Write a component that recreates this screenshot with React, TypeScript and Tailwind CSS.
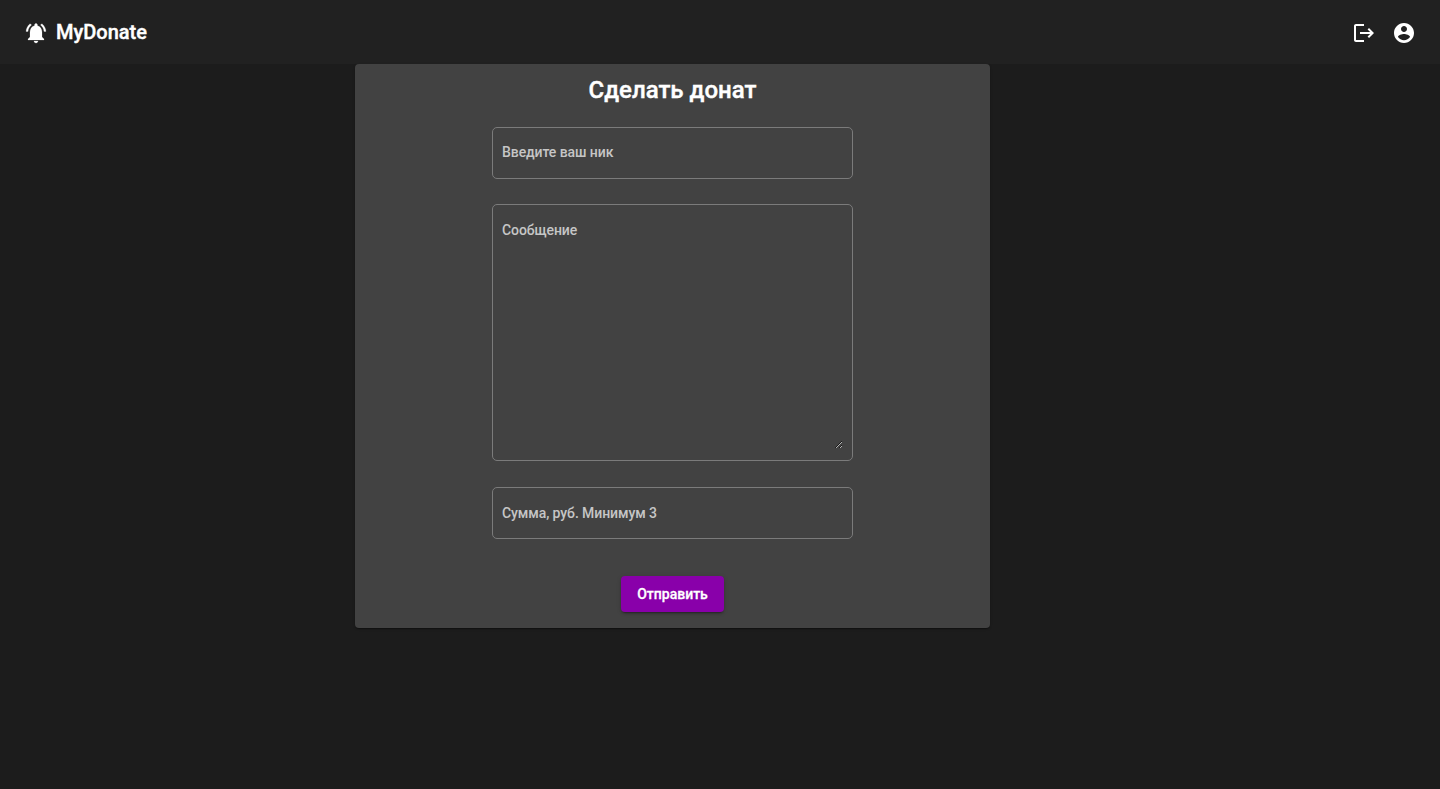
import React from "react";

const icons = {
  bell: "M7.58 4.08L6.15 2.65C3.75 4.48 2.17 7.3 2.03 10.5h2c.15-2.65 1.51-4.97 3.55-6.42zm12.39 6.42h2c-.15-3.2-1.73-6.02-4.12-7.85l-1.42 1.43c2.02 1.45 3.39 3.77 3.54 6.42zM18 11c0-3.07-1.64-5.64-4.5-6.32V4c0-.83-.67-1.5-1.5-1.5s-1.5.67-1.5 1.5v.68C7.63 5.36 6 7.92 6 11v5l-2 2v1h16v-1l-2-2v-5zm-6 11c.14 0 .27-.01.4-.04.65-.14 1.18-.58 1.44-1.18.1-.24.15-.5.15-.78h-4c.01 1.1.9 2 2.01 2z",
  logout: "M17 7l-1.41 1.41L18.17 11H8v2h10.17l-2.58 2.58L17 17l5-5zM4 5h8V3H4c-1.1 0-2 .9-2 2v14c0 1.1.9 2 2 2h8v-2H4V5z",
  account: "M12 2C6.48 2 2 6.48 2 12s4.48 10 10 10 10-4.48 10-10S17.52 2 12 2zm0 3c1.66 0 3 1.34 3 3s-1.34 3-3 3-3-1.34-3-3 1.34-3 3-3zm0 14.2c-2.5 0-4.71-1.28-6-3.22.03-1.99 4-3.08 6-3.08 1.99 0 5.97 1.09 6 3.08-1.29 1.94-3.5 3.22-6 3.22z",
};

function Icon({ name, className = "" }: { name: keyof typeof icons; className?: string }) {
  return (
    <svg viewBox="0 0 24 24" className={`size-6 fill-current ${className}`} aria-hidden="true">
      <path d={icons[name]} />
    </svg>
  );
}

const field =
  "block w-full bg-transparent text-sm font-medium leading-4 tracking-[-0.08px] text-white outline-none placeholder:text-[#c6c6c6]";
const frame = "w-[361px] rounded-[5px] border border-[#7b7b7b] px-[9px]";

export default function App() {
  return (
    <div className="flex h-screen flex-col overflow-hidden bg-[#1c1c1c] font-['Roboto',sans-serif] text-white">
      <header className="flex h-16 shrink-0 items-center justify-between bg-[#212121] px-6 pt-0.5">
        <div className="flex items-center gap-2">
          <Icon name="bell" className="stroke-current stroke-[0.2]" />
          <span className="pb-0.5 text-xl font-medium [-webkit-text-stroke:0.4px]">MyDonate</span>
        </div>
        <div className="flex gap-4">
          <button aria-label="Logout"><Icon name="logout" /></button>
          <button aria-label="Account"><Icon name="account" /></button>
        </div>
      </header>
      <main className="ml-[355px] h-[564px] w-[635px] shrink-0 rounded bg-[#424242] shadow-[0_2px_1px_-1px_rgba(0,0,0,0.2),0_1px_1px_0_rgba(0,0,0,0.14),0_1px_3px_0_rgba(0,0,0,0.12)]">
        <form className="flex flex-col items-center" onSubmit={(e) => e.preventDefault()}>
          <h1 className="mt-2.5 text-2xl leading-8 font-medium [-webkit-text-stroke:0.4px]">Сделать донат</h1>
          <div className={`${frame} mt-[21px] flex h-[52px] items-center pb-0.5`}>
            <input className={field} placeholder="Введите ваш ник" />
          </div>
          <div className={`${frame} mt-[25px] h-[257px] pt-[17px]`}>
            <textarea className={`${field} h-[227px] resize-y`} placeholder="Сообщение" />
          </div>
          <div className={`${frame} mt-[26px] flex h-[52px] items-center`}>
            <input className={field} placeholder="Сумма, руб. Минимум 3" />
          </div>
          <button className="mt-[37px] h-9 rounded bg-[#8900aa] px-4 text-sm font-medium [-webkit-text-stroke:0.3px] shadow-[0_3px_1px_-2px_rgba(0,0,0,0.2),0_2px_2px_0_rgba(0,0,0,0.14),0_1px_5px_0_rgba(0,0,0,0.12)]">
            Отправить
          </button>
        </form>
      </main>
    </div>
  );
}
